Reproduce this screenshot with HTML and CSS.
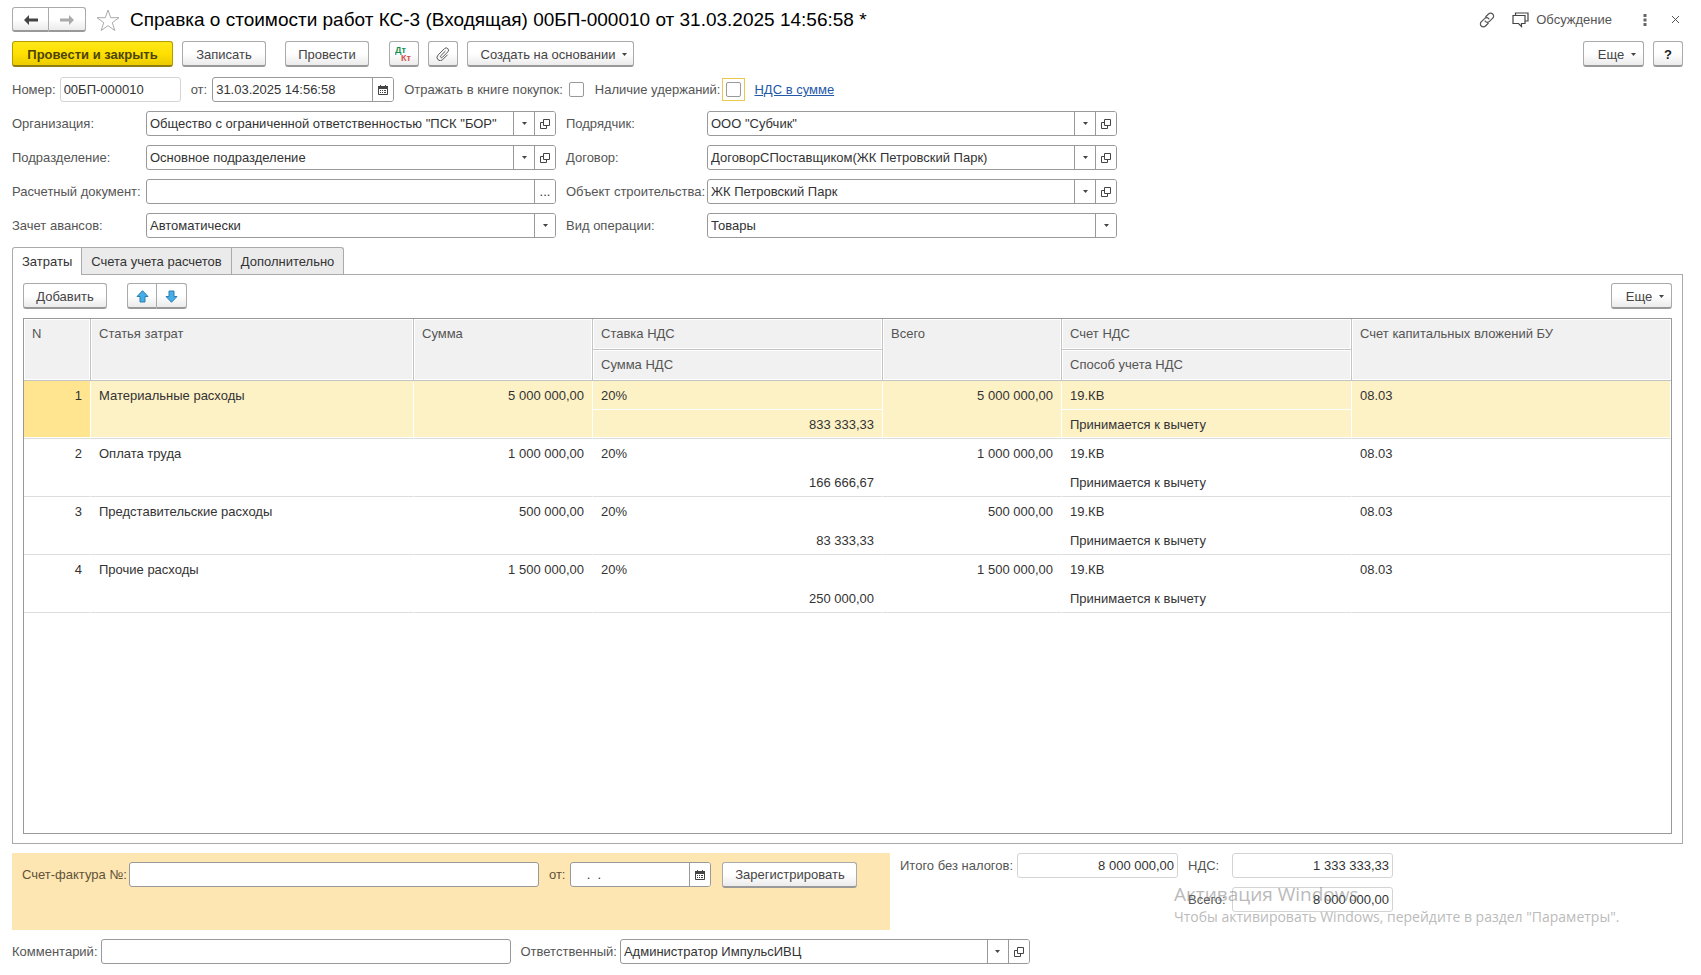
FILE: index.html
```html
<!DOCTYPE html>
<html lang="ru">
<head>
<meta charset="utf-8">
<title>Справка о стоимости работ КС-3</title>
<link rel="stylesheet" href="styles.css">
</head>
<body>
<svg class="defs" aria-hidden="true">
  <symbol id="caret" viewBox="0 0 5 3"><path d="M0 0h5L2.500 3z"/></symbol>
  <symbol id="open" viewBox="0 0 10 10"><path d="M3.500.5h6v6h-6zM3.500 3.500h-3v6h6v-3" fill="none" stroke="#444"/></symbol>
  <symbol id="calendar" viewBox="0 0 10 10"><path d="M0 1h10v3H0z M2 0h1v2H2z M7 0h1v2H7z" /><path d="M.5 3.500v6h9v-6" fill="none" stroke="#444"/><path d="M2 5h1v1H2zM4 5h1v1H4zM6 5h2v1H6zM2 7h1v1H2zM4 7h1v1H4zM6 7h2v1H6z"/></symbol>
</svg>
<main class="form">
  <header class="title-bar">
    <div class="pair">
      <button class="btn" type="button" aria-label="Назад"><svg width="14" height="10" viewBox="0 0 14 10"><path d="M0 5l5-5v3.500h9v3H5V10z" fill="#444"/></svg></button>
      <button class="btn" type="button" aria-label="Вперед"><svg width="14" height="10" viewBox="0 0 14 10"><path d="M14 5L9 0v3.500H0v3h9V10z" fill="#aaa"/></svg></button>
    </div>
    <button class="icon star" type="button" aria-label="В избранное"><svg width="24" height="22" viewBox="0 0 24 22"><path d="M12 1l2.700 7.700h8.300l-6.700 4.900 2.500 7.900-6.800-4.800-6.800 4.800 2.500-7.900L1 8.700h8.300z" fill="#fff" stroke="#aaa"/></svg></button>
    <h1>Справка о стоимости работ КС-3 (Входящая) 00БП-000010 от 31.03.2025 14:56:58 *</h1>
    <div class="tools">
      <button class="icon" type="button" aria-label="Ссылка"><svg width="16" height="16" viewBox="0 0 16 16" fill="none" stroke="#555" stroke-width="1.200"><path d="M6.500 5l3-3a2.900 2.900 0 0 1 4.200 0a2.900 2.900 0 0 1 0 4.200l-3.200 3.200a2.900 2.900 0 0 1-4.200 0l-.5-.7M9.500 11l-3 3a2.900 2.900 0 0 1-4.200 0a2.900 2.900 0 0 1 0-4.200l3.200-3.200a2.900 2.900 0 0 1 4.200 0l.5.7"/></svg></button>
      <button class="icon discuss" type="button"><svg width="17" height="16" viewBox="0 0 17 16" fill="none" stroke="#444" stroke-width="1.200"><path d="M3.500 3.500v-2.500h12.500v8h-2.500M1 3.500h12v8H9.500v3L6.500 11.500H1z"/></svg>Обсуждение</button>
      <button class="icon more" type="button" aria-label="Меню"><svg width="4" height="12" viewBox="0 0 4 12" fill="#666"><path d="M.5 0h3v3h-3zM.5 4.500h3v3h-3zM.5 9h3v3h-3z"/></svg></button>
      <button class="icon close" type="button" aria-label="Закрыть"><svg width="7" height="7" viewBox="0 0 7 7" stroke="#555"><path d="M0 0l7 7M7 0L0 7"/></svg></button>
    </div>
  </header>

  <div class="commands">
    <button class="btn primary" type="button">Провести и закрыть</button>
    <button class="btn save" type="button">Записать</button>
    <button class="btn post" type="button">Провести</button>
    <button class="btn square" type="button" aria-label="Проводки"><svg width="18" height="18" viewBox="0 0 18 18" class="dtkt"><text x="0" y="8" fill="#169150">Дт</text><text x="6" y="16" fill="#d4504c">Кт</text></svg></button>
    <button class="btn square" type="button" aria-label="Файлы"><svg width="14" height="14" viewBox="0 0 14 14" fill="none" stroke="#555"><path d="M9.500 4L4.800 8.700a1.100 1.100 0 0 0 1.600 1.600l5.400-5.400a2.300 2.300 0 0 0-3.300-3.300L2 8.100a3.200 3.200 0 0 0 4.600 4.600l5-5"/></svg></button>
    <button class="btn create" type="button">Создать на основании<svg class="caret"><use href="#caret"/></svg></button>
    <button class="btn etc push" type="button">Еще<svg class="caret"><use href="#caret"/></svg></button>
    <button class="btn square help" type="button">?</button>
  </div>

  <div class="line number-line">
    <label for="num">Номер:</label>
    <div class="field quiet w-num"><input id="num" value="00БП-000010" readonly></div>
    <label for="date">от:</label>
    <div class="field w-date"><input id="date" value="31.03.2025 14:56:58"><button type="button" aria-label="Календарь"><svg class="i10"><use href="#calendar"/></svg></button></div>
    <label for="book">Отражать в книге покупок:</label>
    <input type="checkbox" id="book">
    <label for="hold">Наличие удержаний:</label>
    <span class="focus"><input type="checkbox" id="hold"></span>
    <a href="#vat">НДС в сумме</a>
  </div>

  <div class="props">
    <label for="org">Организация:</label>
    <div class="field"><input id="org" value="Общество с ограниченной ответственностью &quot;ПСК &quot;БОР&quot;"><button type="button" aria-label="Выбрать"><svg class="caret"><use href="#caret"/></svg></button><button type="button" aria-label="Открыть"><svg class="i10"><use href="#open"/></svg></button></div>
    <label for="contr">Подрядчик:</label>
    <div class="field"><input id="contr" value="ООО &quot;Субчик&quot;"><button type="button" aria-label="Выбрать"><svg class="caret"><use href="#caret"/></svg></button><button type="button" aria-label="Открыть"><svg class="i10"><use href="#open"/></svg></button></div>

    <label for="dep">Подразделение:</label>
    <div class="field"><input id="dep" value="Основное подразделение"><button type="button" aria-label="Выбрать"><svg class="caret"><use href="#caret"/></svg></button><button type="button" aria-label="Открыть"><svg class="i10"><use href="#open"/></svg></button></div>
    <label for="deal">Договор:</label>
    <div class="field"><input id="deal" value="ДоговорСПоставщиком(ЖК Петровский Парк)"><button type="button" aria-label="Выбрать"><svg class="caret"><use href="#caret"/></svg></button><button type="button" aria-label="Открыть"><svg class="i10"><use href="#open"/></svg></button></div>

    <label for="doc">Расчетный документ:</label>
    <div class="field"><input id="doc"><button type="button" aria-label="Выбрать документ">...</button></div>
    <label for="obj">Объект строительства:</label>
    <div class="field"><input id="obj" value="ЖК Петровский Парк"><button type="button" aria-label="Выбрать"><svg class="caret"><use href="#caret"/></svg></button><button type="button" aria-label="Открыть"><svg class="i10"><use href="#open"/></svg></button></div>

    <label for="adv">Зачет авансов:</label>
    <div class="field"><select id="adv"><option>Автоматически</option></select><button type="button" aria-label="Выбрать"><svg class="caret"><use href="#caret"/></svg></button></div>
    <label for="kind">Вид операции:</label>
    <div class="field"><select id="kind"><option>Товары</option></select><button type="button" aria-label="Выбрать"><svg class="caret"><use href="#caret"/></svg></button></div>
  </div>

  <div class="tabs" role="tablist">
    <button type="button" role="tab" aria-selected="true">Затраты</button>
    <button type="button" role="tab" aria-selected="false">Счета учета расчетов</button>
    <button type="button" role="tab" aria-selected="false">Дополнительно</button>
  </div>
  <section class="panel">
    <div class="commands">
      <button class="btn add" type="button">Добавить</button>
      <div class="pair arrows">
        <button class="btn" type="button" aria-label="Вверх"><svg width="13" height="13" viewBox="0 0 13 13"><path d="M6.500.7l5.500 5.800H9v5.500H4V6.500H1z" fill="#45aee8" stroke="#2b7fb0"/></svg></button>
        <button class="btn" type="button" aria-label="Вниз"><svg width="13" height="13" viewBox="0 0 13 13"><path d="M6.500 12.300L1 6.500h3V1h5v5.500h3z" fill="#45aee8" stroke="#2b7fb0"/></svg></button>
      </div>
      <button class="btn etc push" type="button">Еще<svg class="caret"><use href="#caret"/></svg></button>
    </div>
    <div class="grid">
      <table>
        <colgroup><col class="c-n"><col class="c-item"><col class="c-sum"><col class="c-rate"><col class="c-total"><col class="c-acc"><col></colgroup>
        <thead>
          <tr><th rowspan="2">N</th><th rowspan="2">Статья затрат</th><th rowspan="2">Сумма</th><th>Ставка НДС</th><th rowspan="2">Всего</th><th>Счет НДС</th><th rowspan="2">Счет капитальных вложений БУ</th></tr>
          <tr><th>Сумма НДС</th><th>Способ учета НДС</th></tr>
        </thead>
        <tbody class="selected">
          <tr><td rowspan="2" class="num">1</td><td rowspan="2">Материальные расходы</td><td rowspan="2" class="num">5 000 000,00</td><td>20%</td><td rowspan="2" class="num">5 000 000,00</td><td>19.КВ</td><td rowspan="2">08.03</td></tr>
          <tr><td class="num">833 333,33</td><td>Принимается к вычету</td></tr>
        </tbody>
        <tbody>
          <tr><td rowspan="2" class="num">2</td><td rowspan="2">Оплата труда</td><td rowspan="2" class="num">1 000 000,00</td><td>20%</td><td rowspan="2" class="num">1 000 000,00</td><td>19.КВ</td><td rowspan="2">08.03</td></tr>
          <tr><td class="num">166 666,67</td><td>Принимается к вычету</td></tr>
        </tbody>
        <tbody>
          <tr><td rowspan="2" class="num">3</td><td rowspan="2">Представительские расходы</td><td rowspan="2" class="num">500 000,00</td><td>20%</td><td rowspan="2" class="num">500 000,00</td><td>19.КВ</td><td rowspan="2">08.03</td></tr>
          <tr><td class="num">83 333,33</td><td>Принимается к вычету</td></tr>
        </tbody>
        <tbody>
          <tr><td rowspan="2" class="num">4</td><td rowspan="2">Прочие расходы</td><td rowspan="2" class="num">1 500 000,00</td><td>20%</td><td rowspan="2" class="num">1 500 000,00</td><td>19.КВ</td><td rowspan="2">08.03</td></tr>
          <tr><td class="num">250 000,00</td><td>Принимается к вычету</td></tr>
        </tbody>
      </table>
    </div>
  </section>

  <div class="summary">
    <div class="invoice">
      <label for="inv">Счет-фактура №:</label>
      <div class="field w-std"><input id="inv"></div>
      <label for="invd">от:</label>
      <div class="field w-inv"><input id="invd" value="  .  ."><button type="button" aria-label="Календарь"><svg class="i10"><use href="#calendar"/></svg></button></div>
      <button class="btn register" type="button">Зарегистрировать</button>
    </div>
    <div class="totals">
      <label for="net">Итого без налогов:</label>
      <div class="field quiet"><input id="net" value="8 000 000,00" readonly></div>
      <label for="vat">НДС:</label>
      <div class="field quiet"><input id="vat" value="1 333 333,33" readonly></div>
      <label for="all" class="third">Всего:</label>
      <div class="field quiet"><input id="all" value="8 000 000,00" readonly></div>
    </div>
    <div class="watermark"><p class="big">Активация Windows</p><p>Чтобы активировать Windows, перейдите в раздел "Параметры".</p></div>
  </div>

  <div class="line comment-line">
    <label for="com">Комментарий:</label>
    <div class="field w-std"><input id="com"></div>
    <label for="resp">Ответственный:</label>
    <div class="field w-std"><input id="resp" value="Администратор ИмпульсИВЦ"><button type="button" aria-label="Выбрать"><svg class="caret"><use href="#caret"/></svg></button><button type="button" aria-label="Открыть"><svg class="i10"><use href="#open"/></svg></button></div>
  </div>
</main>
</body>
</html>
```
FILE: styles.css
```css
* { box-sizing: border-box; }
body { margin: 0; background: #fff; }
body, button, input, select { font: 13px/15px "Liberation Sans", Arial, sans-serif; color: #333; }
button { cursor: pointer; }
.defs { display: none; }
svg { flex: none; }
.form { display: flex; flex-direction: column; min-height: 100vh; padding: 7px 18px 11px 12px; }
label { color: #555; white-space: nowrap; }

.title-bar { display: flex; align-items: center; height: 25px; margin-bottom: 9px; }
h1 { margin: 0; font-size: 19px; line-height: 24px; font-weight: 400; color: #000; white-space: nowrap; }
.icon { display: flex; align-items: center; padding: 0; border: 0; background: none; color: #555; }
.star { margin: 0 10px 0 10px; }
.tools { display: flex; align-items: center; margin-left: auto; padding-right: 4px; }
.discuss { gap: 7px; margin-left: 17px; }
.more { margin-left: 31px; }
.close { margin-left: 25px; }

.btn { display: flex; align-items: center; justify-content: center; height: 26px; padding: 1px 0 0; border: 1px solid #aaa; border-bottom: 2px solid #999; border-radius: 3px; background: linear-gradient(#fff 50%, #ebebeb); color: #444; white-space: nowrap; }
.primary { width: 161px; margin-right: 9px; border-color: #b59d00 #b59d00 #8f7d10; background: linear-gradient(#ffe71a, #ffe000 50%, #eccb00); color: #4d4400; font-weight: 700; }
.save { width: 84px; margin-right: 19px; }
.post { width: 84px; margin-right: 20px; }
.square { width: 30px; margin-right: 9px; }
.create { width: 167px; }
.create, .etc { gap: 7px; padding-left: 7px; }
.etc { width: 61px; }
.push { margin-left: auto; }
.help { margin: 0 0 0 9px; font-weight: 700; color: #222; }
.dtkt { font-size: 9px; font-weight: 700; }
.caret { width: 5px; height: 3px; fill: #444; }
.i10 { width: 10px; height: 10px; fill: #444; }
.pair { display: flex; }
.pair .btn { width: 37px; height: 25px; }
.pair .btn:first-child { border-radius: 3px 0 0 3px; }
.pair .btn:last-child { border-left: 0; border-radius: 0 3px 3px 0; }
.commands { display: flex; height: 26px; }

.line { display: flex; align-items: center; height: 25px; }
.number-line { margin: 10px 0 9px; }
.field { display: flex; height: 25px; border: 1px solid #999; border-radius: 3px; background: #fff; overflow: hidden; }
.field input, .field select { flex: 1; min-width: 0; padding: 0 3px; border: 0; outline: 0; background: none; appearance: none; }
.field button { display: flex; align-items: center; justify-content: center; width: 21px; padding: 0; border: 0; border-left: 1px solid #999; background: #fff; }
.quiet { border-color: #d4d4d4; }
.w-std { width: 410px; margin-right: 10px; }
.w-num { width: 121px; margin: 0 10px 0 4px; }
.w-date { width: 182px; margin: 0 10px 0 5px; }
input[type=checkbox] { width: 15px; height: 15px; margin: 0; border: 1px solid #999; border-radius: 2px; background: #fff; appearance: none; }
.number-line > input { margin: 0 11px 0 6px; }
.focus { display: flex; margin: 0 9px 0 2px; padding: 3px; border: 1px solid #e8c850; }
a { color: #2458a8; }

.props { display: grid; grid-template-columns: 134px 410px 151px 410px; row-gap: 9px; align-items: center; }
.props label:nth-of-type(even) { padding-left: 10px; }

.tabs { display: flex; margin-top: 9px; }
.tabs button { height: 27px; padding: 0 9px; border: 1px solid #aaa; border-bottom: 0; border-left-width: 0; background: #ebebeb; }
.tabs button:first-child { border-left-width: 1px; border-radius: 3px 0 0 0; }
.tabs button:last-child { border-radius: 0 3px 0 0; }
.tabs [aria-selected=true] { z-index: 1; height: 28px; margin-bottom: -1px; background: #fff; }
.panel { display: flex; flex: 1; flex-direction: column; gap: 9px; padding: 8px 10px 9px; border: 1px solid #aaa; }
.add { width: 84px; margin-right: 20px; }
.arrows .btn { width: 30px; height: 26px; }

.grid { flex: 1; border: 1px solid #999; }
table { width: 100%; table-layout: fixed; border-collapse: separate; border-spacing: 0; }
.c-n { width: 67px; }
.c-item { width: 323px; }
.c-sum { width: 179px; }
.c-rate { width: 290px; }
.c-total { width: 179px; }
.c-acc { width: 290px; }
th, td { padding: 7px 8px; vertical-align: top; text-align: left; font-weight: 400; white-space: nowrap; }
th { height: 31px; border-right: 1px solid #c4c4c4; border-bottom: 1px solid #c4c4c4; background: #f1f1f1; box-shadow: inset 0 0 0 1px #fff; color: #555; }
thead tr:first-child th:last-child { border-right: 0; }
td { height: 29px; border-right: 1px solid transparent; }
td[rowspan], tr:last-child td { border-bottom: 1px solid #ddd; }
tr:last-child td { height: 29px; padding-bottom: 6px; }
td.num { text-align: right; }
.selected td { border-right-color: #fff; background: #fdf1c6; box-shadow: inset 0 -1px #fff; }
.selected td:first-child[rowspan] { background: #ffe58f; }

.summary { position: relative; display: flex; align-items: flex-start; margin: 9px 0; }
.invoice { display: flex; align-items: center; width: 878px; height: 77px; padding: 0 10px 34px; background: #fee6b3; }
.invoice label { color: #5f5338; }
.invoice .w-std { margin-left: 2px; }
.w-inv { width: 141px; margin: 0 11px 0 5px; }
.w-inv input { padding-left: 8px; white-space: pre; }
.register { width: 135px; }
.totals { display: grid; grid-template-columns: 117px 161px 54px 161px; row-gap: 9px; align-items: center; padding-left: 10px; }
.totals input { text-align: right; }
.totals label:nth-of-type(n+2) { padding-left: 10px; }
.third { grid-column: 3; }
.watermark { position: absolute; left: 1162px; top: 28px; color: #777; opacity: .5; font-family: "Open Sans", sans-serif; pointer-events: none; white-space: nowrap; }
.watermark p { margin: 0; font-size: 14px; line-height: 20px; }
.watermark .big { font-size: 19px; line-height: 26px; }
.comment-line .w-std { margin-left: 3px; }
```
